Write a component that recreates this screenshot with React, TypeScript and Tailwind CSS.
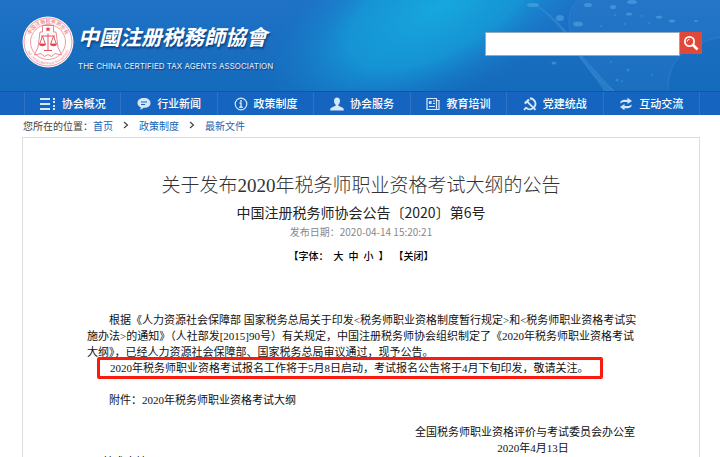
import type { ReactNode } from "react"

type NavItem = {
  label: string
  icon: ReactNode
}

const navItems: NavItem[] = [
  {
    label: "协会概况",
    icon: (
      <svg viewBox="0 0 16 12" className="h-3 w-4" fill="currentColor">
        <path d="M0 0h10v2H0zM0 5h10v2H0zM0 10h10v2H0zM13 0h2v2h-2zM13 3h2v2h-2zM13 7h2v2h-2zM13 10h2v2h-2z" />
      </svg>
    ),
  },
  {
    label: "行业新闻",
    icon: (
      <svg viewBox="0 0 14 14" className="h-3.5 w-3.5" fill="currentColor">
        <path d="M7 1C3 1 .5 3 .5 6c0 2 1.2 3.500 3.200 4.300L3.500 13l3.200-2.200C11 11 13.500 9 13.500 6S11 1 7 1z" />
        <path d="M4 5h6M4 7.500h4" stroke="#1565c0" strokeWidth="1.100" />
      </svg>
    ),
  },
  {
    label: "政策制度",
    icon: (
      <svg viewBox="0 0 14 14" className="h-3.5 w-3.5" fill="none" stroke="currentColor">
        <circle cx="7" cy="7" r="5.800" strokeWidth="1.200" />
        <path d="M7 3v2M5.500 6H7v4M5.200 10.300h3.600" strokeWidth="1.400" />
      </svg>
    ),
  },
  {
    label: "协会服务",
    icon: (
      <svg viewBox="0 0 14 14" className="h-3.5 w-3.5" fill="currentColor">
        <path d="M7 .5c-2 0-3 1.300-3 3.200C4 5.500 4.800 7 5.600 7.600v1.200L1.200 10.800C.4 11.200.2 12 .2 13.500h13.600c0-1.500-.2-2.300-1-2.700L8.400 8.800V7.600C9.200 7 10 5.500 10 3.700 10 1.800 9 .5 7 .5z" />
      </svg>
    ),
  },
  {
    label: "教育培训",
    icon: (
      <svg viewBox="0 0 14 14" className="h-3.5 w-3.5" fill="none" stroke="currentColor" strokeWidth="1.200">
        <path d="M1 1.500h9.500v11H1zM10.500 3.500H13v9h-2.500" />
        <path d="M3.500 4.500h1.500v2H3.500zM7 4h2M7 6.500h2M3 9.500h6" />
      </svg>
    ),
  },
  {
    label: "党建统战",
    icon: (
      <svg viewBox="0 0 14 14" className="h-3.5 w-3.5" fill="none" stroke="currentColor">
        <path d="M7 1.200c5.500 1 6.800 6 4 9.200-2.200 2.400-5.600 2.400-8 .2" strokeWidth="1.900" />
        <path d="M3.500 10.300 1 12.800M4.500 4.800l8 8" strokeWidth="1.900" />
        <path d="M1.800 6.500 6 2.500" strokeWidth="2.400" />
      </svg>
    ),
  },
  {
    label: "互动交流",
    icon: (
      <svg viewBox="0 0 14 14" className="h-3.5 w-3.5" fill="currentColor">
        <path d="M1.200 6.500C1.200 4 3 2.800 5.500 2.800h3V.8L13 4 8.500 7V5H6C4 5 2.800 5.300 1.200 6.500zM12.800 7.500c0 2.500-1.800 3.700-4.300 3.700h-3v2L1 10l4.500-3v2H8c2 0 3.200-.3 4.800-1.500z" />
      </svg>
    ),
  },
]

const crumbs = ["首页", "政策制度", "最新文件"]

const Emblem = () => (
  <svg viewBox="0 0 52 52" className="h-13 w-13 shrink-0" role="img" aria-label="中国注册税务师协会会徽">
    <defs>
      <path id="ringTop" d="M7 26a19 19 0 0 1 38 0" />
      <path id="ringBottom" d="M3.500 26a22.500 22.500 0 0 0 45 0" />
    </defs>
    <circle cx="26" cy="26" r="25.500" fill="#fff" />
    <circle cx="26" cy="26" r="24" fill="none" stroke="#ee8088" strokeWidth="0.800" />
    <circle cx="26" cy="26" r="17.500" fill="none" stroke="#ee8088" strokeWidth="0.800" />
    <text fill="#e8606b" fontSize="5" fontFamily="'Noto Sans CJK SC', sans-serif">
      <textPath href="#ringTop" startOffset="50%" textAnchor="middle">
        中国注册税务师协会
      </textPath>
    </text>
    <text fill="#e8606b" fontSize="3" fontFamily="'Liberation Sans', sans-serif">
      <textPath href="#ringBottom" startOffset="50%" textAnchor="middle">
        THE CHINA CERTIFIED TAX AGENTS
      </textPath>
    </text>
    <path
      d="M20.500 9.500h11V16H34l2 15 3.500 8-6.500-1.500-3.500 3-3.500-2-3.500 2-3.500-3-6.500 1.500L16 31l2-15h2.500z"
      fill="#fff"
      stroke="#ea6a74"
      strokeWidth="0.800"
    />
    <path d="m26 10.500.8 1.700 1.900.2-1.400 1.300.4 1.900-1.700-1-1.700 1 .4-1.900-1.400-1.300 1.900-.2z" fill="#e04552" />
    <path
      d="M26 17.500V34M19 20h14M22 34.500h8M20.500 20l-2.800 8h5.600zM31.500 20l-2.800 8h5.600z"
      fill="none"
      stroke="#e04552"
      strokeWidth="0.900"
    />
    <path d="M17 28h7c-.5 3-6.500 3-7 0zM28 28h7c-.5 3-6.500 3-7 0z" fill="#e04552" />
  </svg>
)

const HeaderArt = () => (
  <svg viewBox="0 0 720 91" preserveAspectRatio="none" className="absolute inset-0 h-full w-full" aria-hidden="true">
    <defs>
      <linearGradient id="base" x1="0" y1="0" x2="0" y2="1">
        <stop offset="0" stopColor="#1f72c6" />
        <stop offset="1" stopColor="#146abb" />
      </linearGradient>
      <radialGradient
        id="glow"
        gradientUnits="userSpaceOnUse"
        cx="0"
        cy="0"
        r="1"
        gradientTransform="translate(440 6) rotate(-28) scale(200 92)"
      >
        <stop offset="0" stopColor="#16a8de" />
        <stop offset="0.500" stopColor="#159ad7" stopOpacity="0.850" />
        <stop offset="1" stopColor="#1876c8" stopOpacity="0" />
      </radialGradient>
    </defs>
    <rect width="720" height="91" fill="url(#base)" />
    <rect width="720" height="91" fill="url(#glow)" />
    <path d="M527 0q22 10 40 32l14 22q14 17 34 37h-11q-12-18-28-38l-12-20Q548 12 527 0z" fill="#5fb0ec" opacity="0.250" />
    <path d="M577 0q-16 20 0 50 11 26 38 41M668 91q-3-42 52-54" fill="none" stroke="#58a8e6" opacity="0.250" />
    <path d="M578 0h142v38q-50 4-52 53h-50Q550 44 578 0z" fill="#3a87d2" opacity="0.200" />
    <g fill="#66b5ee" opacity="0.450">
      <ellipse cx="533" cy="5" rx="6" ry="2" />
      <ellipse cx="560" cy="18" rx="4" ry="3" />
      <ellipse cx="578" cy="24" rx="5" ry="2.500" />
      <ellipse cx="588" cy="5" rx="4" ry="2" />
      <ellipse cx="613" cy="7" rx="3" ry="2" />
      <ellipse cx="632" cy="2" rx="5" ry="2" />
      <ellipse cx="629" cy="14" rx="3" ry="1.500" />
      <ellipse cx="659" cy="17" rx="3" ry="1.500" />
      <ellipse cx="672" cy="21" rx="3" ry="1.500" />
      <ellipse cx="696" cy="21" rx="2" ry="1" />
      <ellipse cx="554" cy="63" rx="2.500" ry="1.500" />
    </g>
    <g fill="#1ba2e6" opacity="0.700">
      <circle cx="615" cy="15" r="1" />
      <circle cx="642" cy="16" r="1" />
      <circle cx="649" cy="23" r="1" />
      <circle cx="625" cy="24" r="1" />
      <circle cx="601" cy="26" r="1" />
      <circle cx="611" cy="62" r="1" />
      <circle cx="628" cy="70" r="1.500" />
      <circle cx="617" cy="80" r="1.500" />
      <circle cx="622" cy="81" r="1" />
      <circle cx="652" cy="75" r="1" />
    </g>
  </svg>
)

const SearchBox = () => (
  <form className="mt-4 mr-[18px] flex items-start" onSubmit={(e) => e.preventDefault()}>
    <input
      type="text"
      aria-label="搜索"
      className="h-6 w-[195px] border border-[#8fa9be] bg-white px-1 text-xs text-gray-800 outline-none"
    />
    <button
      type="submit"
      aria-label="搜索"
      className="flex h-[22px] w-[22px] items-center justify-center bg-[#e0483a] text-white"
    >
      <svg viewBox="0 0 16 16" className="h-4 w-4" fill="none" stroke="currentColor">
        <circle cx="6.500" cy="6.500" r="4.600" strokeWidth="1.800" />
        <path d="M4.300 6.500a2.200 2.200 0 0 1 2.200-2.200" strokeWidth="1" />
        <path d="m10 10 4.500 4.500" strokeWidth="2.600" />
      </svg>
    </button>
  </form>
)

const Header = () => (
  <header className="bg-[#1565c0] text-white">
    <div className="relative h-[91px]">
      <HeaderArt />
      <div className="relative flex items-start justify-between pt-4 pl-[22px]">
        <div className="flex items-start gap-1">
          <Emblem />
          <div className="flex flex-col">
            <span className="font-['Noto_Sans_CJK_TC','Noto_Sans_CJK_SC',sans-serif] text-[21px] leading-10 font-bold whitespace-nowrap italic [text-shadow:1px_2px_2px_#0b3f80]">
              中國注册税務師協會
            </span>
            <span className="font-[Inter,sans-serif] text-[8px] leading-5 whitespace-nowrap text-[#e3effb] [text-shadow:1px_1px_1px_#0b3f80]">
              THE CHINA CERTIFIED TAX AGENTS ASSOCIATION
            </span>
          </div>
        </div>
        <SearchBox />
      </div>
    </div>
    <nav className="flex h-6 border-t border-[#0f55a8] pr-5 pl-6">
      {navItems.map((item) => (
        <a
          key={item.label}
          href="#"
          className="flex flex-1 items-center justify-center gap-1.5 border-l border-[#2f74c4] text-[11px] font-medium whitespace-nowrap last:border-r"
        >
          <span className="text-[#d5e6f8]">{item.icon}</span>
          {item.label}
        </a>
      ))}
    </nav>
  </header>
)

const Breadcrumb = () => (
  <div className="flex h-[22px] items-center pb-0.5 pl-[23px] text-[10px] whitespace-nowrap text-[#444]">
    <span>您所在的位置：</span>
    {crumbs.map((crumb, i) => (
      <span key={crumb} className="flex items-center">
        {i > 0 && (
          <svg viewBox="0 0 6 8" className="mx-2.5 h-2 w-1.5" fill="none" stroke="currentColor">
            <path d="m1 1 3.500 3L1 7" strokeWidth="1.200" />
          </svg>
        )}
        <a href="#" className="text-[#1565b5]">
          {crumb}
        </a>
      </span>
    ))}
  </div>
)

const Article = () => (
  <article className="mr-5 ml-[22px] border border-[#ddd] px-16 pt-8 text-black">
    <h1 className="text-center font-['Liberation_Serif','Noto_Sans_CJK_SC',serif] text-[19px] leading-8 font-light whitespace-nowrap text-[#333]">
      关于发布2020年税务师职业资格考试大纲的公告
    </h1>
    <h2 className="text-center text-sm leading-5 whitespace-nowrap text-[#222]">中国注册税务师协会公告〔2020〕第6号</h2>
    <p className="text-center text-[10px] leading-5 text-[#888]">发布日期：2020-04-14 15:20:21</p>
    <div className="flex justify-center gap-[5px] pt-1 text-[10px] leading-5 font-medium">
      <span>【字体：</span>
      <button type="button">大</button>
      <button type="button">中</button>
      <button type="button">小</button>
      <span>】</span>
      <button type="button">【关闭】</button>
    </div>
    <div className="pt-[46px] font-['Liberation_Serif','Noto_Sans_CJK_SC',serif] text-[11px] leading-4 whitespace-nowrap text-[#111]">
      <p>
        <span className="pl-[22px]">
          根据《人力资源社会保障部 国家税务总局关于印发&lt;税务师职业资格制度暂行规定&gt;和&lt;税务师职业资格考试实
        </span>
        <br />
        施办法&gt;的通知》（人社部发[2015]90号）有关规定，中国注册税务师协会组织制定了《2020年税务师职业资格考试
        <br />
        大纲》，已经人力资源社会保障部、国家税务总局审议通过，现予公告。
      </p>
      <p className="-my-[3px] mr-8 ml-2.5 rounded-xs border-[3px] border-[#fb1a0e] pl-2.5">
        2020年税务师职业资格考试报名工作将于5月8日启动，考试报名公告将于4月下旬印发，敬请关注。
      </p>
      <p className="pt-4 pl-[22px]">附件：2020年税务师职业资格考试大纲</p>
      <div className="flex justify-end pt-4">
        <div className="text-center">
          <p>全国税务师职业资格评价与考试委员会办公室</p>
          <p className="pl-4">2020年4月13日</p>
        </div>
      </div>
    </div>
    <p className="ml-4 text-[11px] leading-2.5">技术支持</p>
  </article>
)

const App = () => {
  return (
    <div className="h-screen overflow-hidden bg-white font-['Noto_Sans_CJK_SC',sans-serif]">
      <Header />
      <Breadcrumb />
      <Article />
    </div>
  )
}

export default App
